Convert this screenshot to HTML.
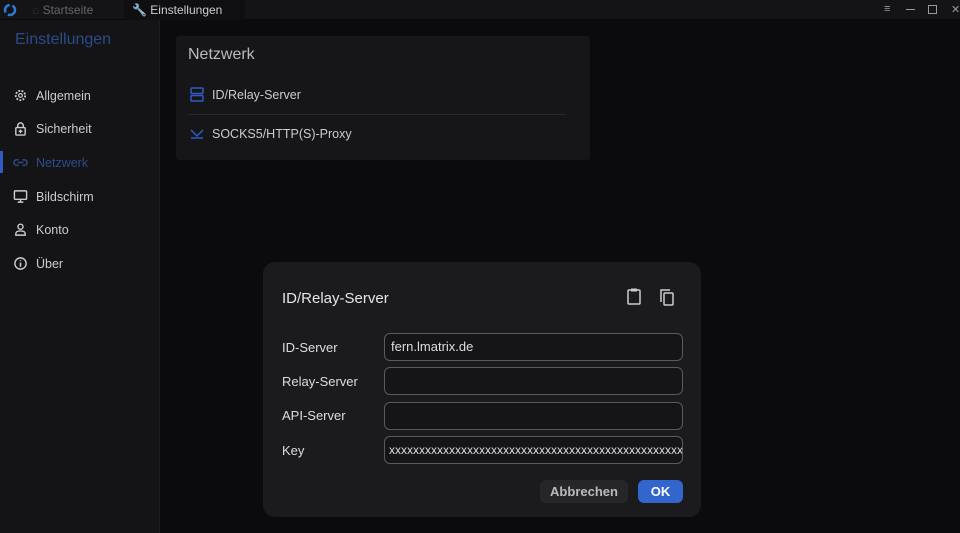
<!DOCTYPE html>
<html><head><meta charset="utf-8"><style>
*{margin:0;padding:0;box-sizing:border-box}
body{width:960px;height:533px;background:#0b0b0d;font-family:"Liberation Sans",sans-serif;color:#ddd;position:relative;overflow:hidden}
.top{position:absolute;left:0;top:0;width:960px;height:20px;background:#141416;border-bottom:1px solid #0a0a0a}
.tab{position:absolute;top:0;height:20px;font-size:12px;line-height:20px;white-space:nowrap}
.side{position:absolute;left:0;top:20px;width:160px;height:513px;background:#141416;border-right:1px solid #1e1e20}
.side h1{position:absolute;left:15px;top:11px;font-size:16px;font-weight:normal;color:#2c4a8a}
.item{position:absolute;left:13px;font-size:12.5px;color:#ccc;display:flex;align-items:center;gap:8px}
.item svg{width:15px;height:15px}
.card{position:absolute;left:176px;top:36px;width:414px;height:124px;background:#161619;border-radius:3px}
.dlg{position:absolute;left:263px;top:262px;width:438px;height:255px;background:#1b1b1e;border-radius:12px}
.lbl{position:absolute;left:19px;font-size:13px;color:#ddd}
.inp{position:absolute;left:121px;width:299px;height:28px;border:1px solid #5a5a5e;border-radius:6px;background:#151517;font-size:13px;line-height:26px;padding-left:6px;color:#ddd;overflow:hidden;white-space:nowrap}
.wc{position:absolute;top:3px;font-size:11px;color:#999}
</style></head><body>
<div class="top">
 <svg style="position:absolute;left:3px;top:3px" width="14" height="14" viewBox="0 0 14 14"><circle cx="7" cy="7" r="5" fill="none" stroke="#2c7ad6" stroke-width="2.5" stroke-dasharray="10 3"/></svg>
 <div class="tab" style="left:32px;color:#666"><span style="color:#333">⌂</span> Startseite</div>
 <div class="tab" style="left:124px;width:121px;background:#0f0f11;padding-left:8px;color:#ccc"><span style="color:#4a90e2">🔧</span> Einstellungen</div>
 <div class="wc" style="left:884px">≡</div>
 <div style="position:absolute;left:906px;top:9px;width:9px;height:1px;background:#999"></div>
 <div style="position:absolute;left:928px;top:5px;width:9px;height:9px;border:1.5px solid #999"></div>
 <div class="wc" style="left:951px">✕</div>
</div>
<div class="side">
 <h1>Einstellungen</h1>
 <div class="item" style="top:68px"><svg viewBox="0 0 16 16"><circle cx="8" cy="8" r="5" fill="none" stroke="#ccc" stroke-width="2" stroke-dasharray="2 1.5"/><circle cx="8" cy="8" r="2" fill="none" stroke="#ccc" stroke-width="1.3"/></svg>Allgemein</div>
 <div class="item" style="top:101px"><svg viewBox="0 0 16 16"><rect x="3" y="7" width="10" height="8" rx="1" fill="none" stroke="#ccc" stroke-width="1.5"/><path d="M5 7V5a3 3 0 016 0v2M8 9v4M6 11h4" fill="none" stroke="#ccc" stroke-width="1.5"/></svg>Sicherheit</div>
 <div style="position:absolute;left:0;top:131px;width:3px;height:22px;background:#2f5cc4"></div>
 <div class="item" style="top:135px;color:#2c4a8a"><svg viewBox="0 0 16 16"><path d="M6 5H4a3 3 0 000 6h2M10 5h2a3 3 0 010 6h-2M5 8h6" fill="none" stroke="#2c4a8a" stroke-width="1.6"/></svg>Netzwerk</div>
 <div class="item" style="top:169px"><svg viewBox="0 0 16 16"><rect x="1.5" y="2" width="13" height="9" rx="1" fill="none" stroke="#ccc" stroke-width="1.5"/><path d="M8 11v3M5 14h6" stroke="#ccc" stroke-width="1.5"/></svg>Bildschirm</div>
 <div class="item" style="top:202px"><svg viewBox="0 0 16 16"><circle cx="8" cy="5" r="2.7" fill="none" stroke="#ccc" stroke-width="1.5"/><path d="M3 14v-1.5c0-2 2-3 5-3s5 1 5 3V14z" fill="none" stroke="#ccc" stroke-width="1.5"/></svg>Konto</div>
 <div class="item" style="top:236px"><svg viewBox="0 0 16 16"><circle cx="8" cy="8" r="6" fill="none" stroke="#ccc" stroke-width="1.5"/><path d="M8 7v4.5M8 4.5v1" stroke="#ccc" stroke-width="1.7"/></svg>Über</div>
</div>
<div class="card">
 <div style="position:absolute;left:12px;top:10px;font-size:16px;color:#bbb">Netzwerk</div>
 <svg style="position:absolute;left:14px;top:51px" width="14" height="15" viewBox="0 0 14 15"><rect x="1" y="1" width="12" height="5.5" rx="1" fill="none" stroke="#2f5cc4" stroke-width="1.5"/><rect x="1" y="8.5" width="12" height="5.5" rx="1" fill="none" stroke="#2f5cc4" stroke-width="1.5"/></svg>
 <div style="position:absolute;left:36px;top:52px;font-size:12.5px;color:#ccc">ID/Relay-Server</div>
 <div style="position:absolute;left:12px;top:78px;width:378px;height:1px;background:#28282b"></div>
 <svg style="position:absolute;left:14px;top:92px" width="14" height="12" viewBox="0 0 14 12"><path d="M1 2l6 6 6-6M1 10h12" fill="none" stroke="#2f5cc4" stroke-width="1.5"/></svg>
 <div style="position:absolute;left:36px;top:91px;font-size:12.5px;color:#ccc">SOCKS5/HTTP(S)-Proxy</div>
</div>
<div class="dlg">
 <div style="position:absolute;left:19px;top:28px;font-size:15px;color:#e6e6e6">ID/Relay-Server</div>
 <svg style="position:absolute;left:363px;top:25px" width="16" height="19" viewBox="0 0 16 19"><rect x="2" y="3" width="12" height="14" rx="1" fill="none" stroke="#ccc" stroke-width="1.5"/><rect x="5" y="1.5" width="6" height="3" fill="#ccc"/></svg>
 <svg style="position:absolute;left:395px;top:26px" width="18" height="19" viewBox="0 0 18 19"><path d="M3 14V2h9" fill="none" stroke="#ccc" stroke-width="1.5"/><rect x="6" y="5" width="9" height="12" rx="1" fill="none" stroke="#ccc" stroke-width="1.5"/></svg>
 <div class="lbl" style="top:78px">ID-Server</div><div class="inp" style="top:71px">fern.lmatrix.de</div>
 <div class="lbl" style="top:112px">Relay-Server</div><div class="inp" style="top:105px"></div>
 <div class="lbl" style="top:146px">API-Server</div><div class="inp" style="top:140px"></div>
 <div class="lbl" style="top:181px">Key</div><div class="inp" style="top:174px;font-size:12px;padding-left:4px">xxxxxxxxxxxxxxxxxxxxxxxxxxxxxxxxxxxxxxxxxxxxxxxxxxxxxxxxxxxxxxxx</div>
 <div style="position:absolute;left:277px;top:218px;width:88px;height:23px;background:#262629;border-radius:6px;font-size:13px;font-weight:bold;color:#bbb;text-align:center;line-height:23px">Abbrechen</div>
 <div style="position:absolute;left:375px;top:218px;width:45px;height:23px;background:#3366cc;border-radius:6px;font-size:13px;font-weight:bold;color:#fff;text-align:center;line-height:23px">OK</div>
</div>
</body></html>
